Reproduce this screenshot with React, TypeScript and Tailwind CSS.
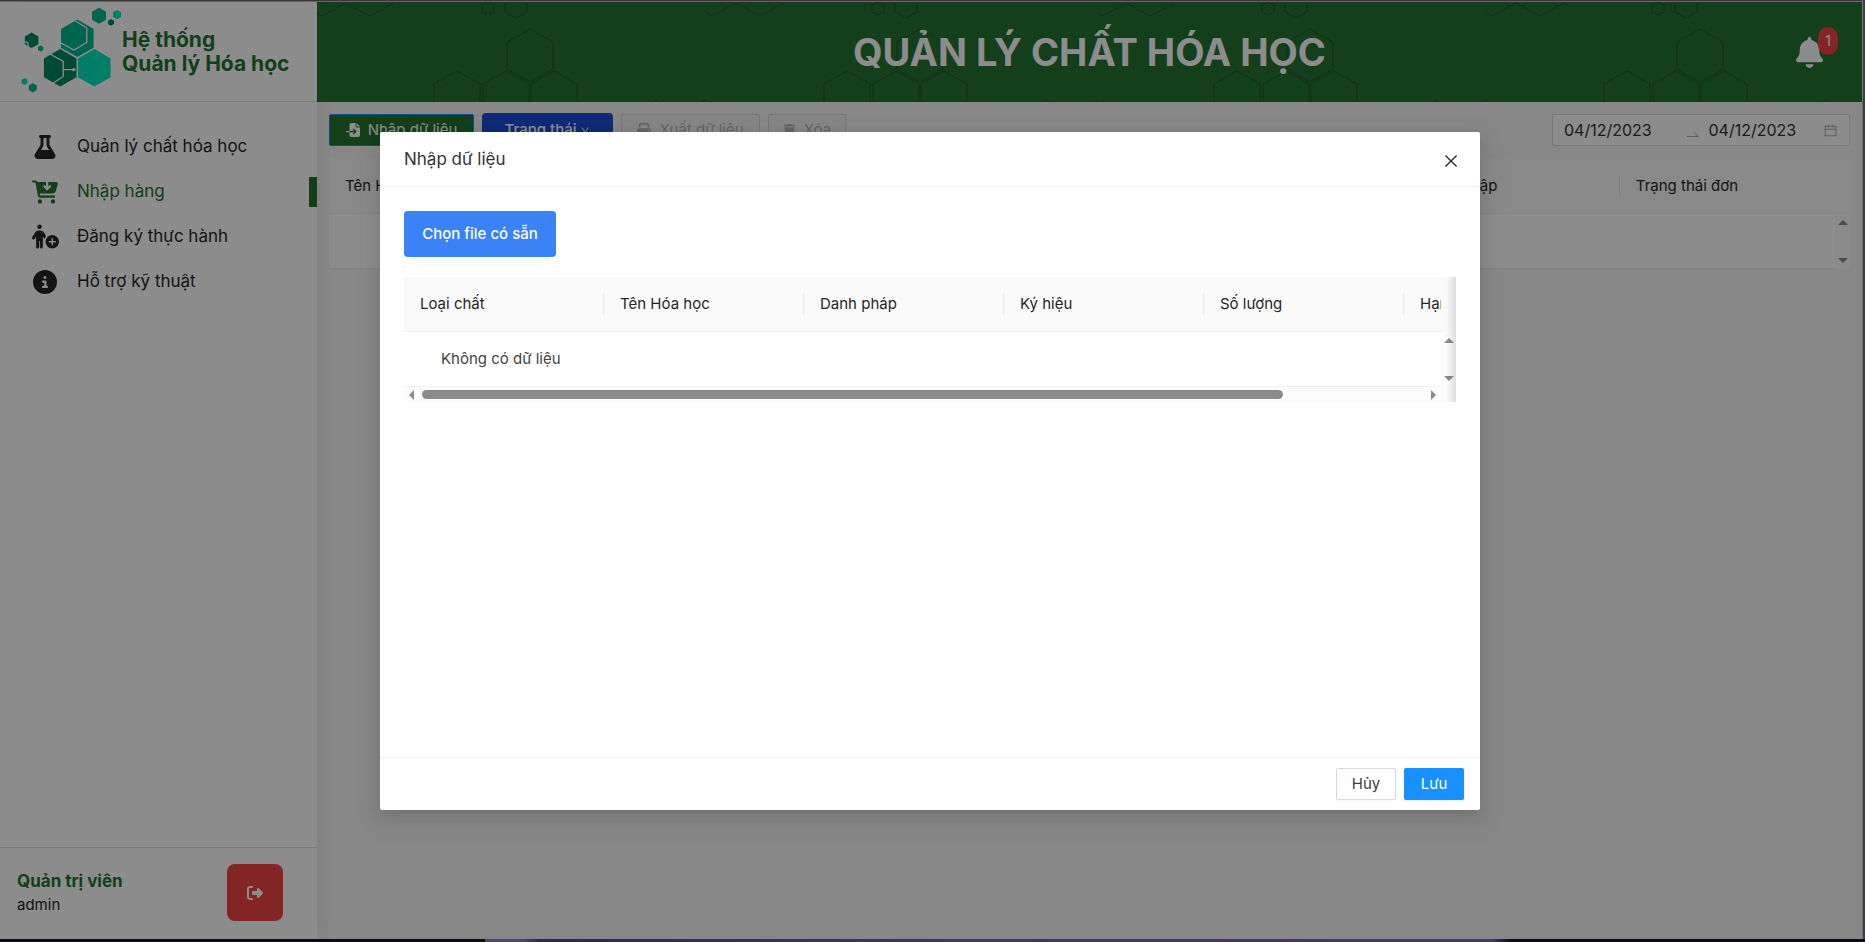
import type { ReactNode } from "react";
import { FaBell, FaCartArrowDown, FaCircleInfo, FaFileImport, FaFlask, FaPersonCirclePlus, FaPrint, FaRightFromBracket, FaTrash } from "react-icons/fa6";
import { AiOutlineCalendar, AiOutlineClose, AiOutlineDown } from "react-icons/ai";

function hex(cx: number, cy: number, w: number, h: number) {
  const q = h / 2;
  return [
    [cx, cy - h],
    [cx + w, cy - q],
    [cx + w, cy + q],
    [cx, cy + h],
    [cx - w, cy + q],
    [cx - w, cy - q],
  ].map((p) => p.join(",")).join(" ");
}

function Logo() {
  return (
    <svg viewBox="20 6 102 86" className="h-[86px] w-[102px] shrink-0" aria-hidden="true">
      <polygon points={hex(77.3, 37.3, 16.3, 18.8)} fill="#00b68f" />
      <polyline points="73,18.5 86.8,27 86.8,41.5 74,49 60,41.5" fill="none" stroke="#fff" strokeWidth="1.3" />
      <polygon points={hex(60.2, 66.8, 16.3, 18.8)} fill="#008862" />
      <polyline points="50,53 63.2,60.5 63.2,75.5 51,83.5" fill="none" stroke="#fff" strokeWidth="1.3" />
      <path d="M63 68.6H73" stroke="#fff" strokeWidth="1.2" />
      <circle cx="73.8" cy="68.6" r="1.7" fill="#fff" />
      <polygon points={hex(94.3, 66.8, 16.3, 18.8)} fill="#00e6bd" />
      <polygon points={hex(99, 14.8, 7, 8)} fill="#00b68f" />
      <polygon points={hex(117, 13.6, 4, 4.6)} fill="#00e6bd" />
      <polygon points={hex(111, 21.4, 3, 3.4)} fill="#008862" />
      <polygon points={hex(31.6, 39.3, 6.8, 7.8)} fill="#008862" />
      <path d="M24 40.5l4 1.5v4" fill="none" stroke="#fff" strokeWidth="1.2" />
      <polygon points={hex(40.6, 47.5, 2.6, 3)} fill="#00b68f" />
      <polygon points={hex(24.5, 80.5, 3, 3.5)} fill="#00e6bd" />
      <polygon points={hex(32.8, 86.8, 4, 4.6)} fill="#00b68f" />
    </svg>
  );
}

function HexPattern() {
  return (
    <svg className="absolute inset-0 h-full w-full" aria-hidden="true">
      <defs>
        <pattern id="hexes" width="390" height="100" patternUnits="userSpaceOnUse">
          <g fill="none" stroke="#000" strokeOpacity="0.24" strokeWidth="1">
            <path d="M0 11L5 14L29 1L53 14L77 1" />
            <path d="M165 3L171 0L177 3V10L171 13L165 10Z" />
            <path d="M188 0V10L199 16L210 10V0" />
            <path d="M213 27L236 40V67L213 80L190 67V40Z" />
            <path d="M117 100V82L140 69L163 82V100" />
            <path d="M166 100V82L189 69L212 82V100" />
            <path d="M214 100V82L237 69L260 82V100" />
            <path d="M336 100L339 98L342 100M385 100L388 98L390 99" />
          </g>
        </pattern>
      </defs>
      <rect width="100%" height="100%" fill="url(#hexes)" />
    </svg>
  );
}

function Arrow({ dir }: { dir: "up" | "down" | "left" | "right" }) {
  const d = {
    up: "M0 5L5 0L10 5Z",
    down: "M0 0H10L5 5Z",
    left: "M5 0V10L0 5Z",
    right: "M0 0L5 5L0 10Z",
  }[dir];
  const vertical = dir === "up" || dir === "down";
  return (
    <svg width={vertical ? 10 : 5} height={vertical ? 5 : 10} className="fill-[#8b8b8b]" aria-hidden="true">
      <path d={d} />
    </svg>
  );
}

function VerticalScroll() {
  return (
    <div className="flex w-[15px] shrink-0 flex-col items-center justify-between bg-[#fcfcfc] py-1.5">
      <Arrow dir="up" />
      <Arrow dir="down" />
    </div>
  );
}

function HeadCell({ children, last }: { children?: ReactNode; last?: boolean }) {
  return (
    <th className="h-[55px] border-b border-[#f0f0f0] p-0 text-left font-normal">
      <div className={last ? "flex h-[22px] items-center px-4" : "flex h-[22px] items-center border-r border-[#e8e8e8] px-4"}>
        {children}
      </div>
    </th>
  );
}

const menu = [
  { label: "Quản lý chất hóa học", icon: <FaFlask size={24} /> },
  { label: "Nhập hàng", icon: <FaCartArrowDown size={26} />, active: true },
  { label: "Đăng ký thực hành", icon: <FaPersonCirclePlus size={27} /> },
  { label: "Hỗ trợ kỹ thuật", icon: <FaCircleInfo size={24} /> },
];

function Sidebar() {
  return (
    <aside className="relative z-10 flex w-[317px] shrink-0 flex-col bg-white shadow-[2px_0_20px_rgba(0,0,0,0.08)]">
      <div className="flex h-[100px] items-center border-b border-[#e0e0e0] pb-1 pl-5">
        <Logo />
        <p className="pt-1 text-[21px] leading-6 font-bold text-[#247331]">
          Hệ thống
          <br />
          Quản lý Hóa học
        </p>
      </div>
      <nav className="flex flex-1 flex-col pt-[22px]">
        {menu.map((m) => (
          <a
            key={m.label}
            href="#"
            className={
              m.active
                ? "flex h-[45px] items-center pl-[29px] text-[17px] text-[#247331]"
                : "flex h-[45px] items-center pl-[29px] text-[17px] text-[#262626]"
            }
          >
            <span className="flex w-8 justify-center">{m.icon}</span>
            <span className="ml-4 flex-1">{m.label}</span>
            {m.active && <span className="h-[30px] w-2 bg-[#247331]" />}
          </a>
        ))}
      </nav>
      <div className="flex h-[92px] items-center justify-between border-t border-[#dcdcdc] pr-[34px] pb-0.5 pl-[17px]">
        <div>
          <p className="text-[17px] leading-6 font-bold text-[#247331]">Quản trị viên</p>
          <p className="text-[15px] leading-6 text-[#262626]">admin</p>
        </div>
        <button type="button" aria-label="Đăng xuất" className="flex h-[57px] w-14 items-center justify-center rounded-lg bg-[#ef4444] text-white">
          <FaRightFromBracket size={16} />
        </button>
      </div>
    </aside>
  );
}

function Toolbar() {
  return (
    <div className="flex items-center gap-2">
      <button type="button" className="flex h-8 w-[145px] items-center justify-center gap-2 rounded-xs border border-[#1890ff] bg-[#247331] text-[15px] text-white">
        <FaFileImport size={14} />
        Nhập dữ liệu
      </button>
      <button type="button" className="flex h-[34px] w-[131px] items-center justify-center gap-1 rounded bg-[#1d4ed8] text-[15px] font-medium text-white">
        Trạng thái
        <AiOutlineDown size={10} />
      </button>
      <button type="button" disabled className="flex h-8 w-[139px] items-center justify-center gap-2 rounded-xs border border-[#d9d9d9] bg-[#f5f5f5] text-[15px] text-[#b8b8b8]">
        <FaPrint size={14} />
        Xuất dữ liệu
      </button>
      <button type="button" disabled className="flex h-8 w-[78px] items-center justify-center gap-2 rounded-xs border border-[#d9d9d9] bg-[#f5f5f5] text-[15px] text-[#b8b8b8]">
        <FaTrash size={13} />
        Xóa
      </button>
      <div className="ml-auto flex h-8 w-[298px] items-center rounded-xs border border-[#d9d9d9] bg-white px-[11px] text-[16px] text-[#333]">
        <input aria-label="Từ ngày" defaultValue="04/12/2023" className="w-0 flex-1 bg-transparent outline-none" />
        <svg width="12" height="5" className="mt-2 mr-[10px] ml-2 shrink-0 stroke-[#aaa]" fill="none" aria-hidden="true">
          <path d="M0 4.500H11.500L7 0.500" />
        </svg>
        <input aria-label="Đến ngày" defaultValue="04/12/2023" className="w-0 flex-1 bg-transparent outline-none" />
        <AiOutlineCalendar size={15} className="shrink-0 text-[#aaa]" />
      </div>
    </div>
  );
}

function OrdersTable() {
  return (
    <div className="mt-3 flex bg-[#fafafa]">
      <div className="min-w-0 flex-1">
        <table className="w-full table-fixed border-separate border-spacing-0 text-[15px] text-[#262626]">
          <thead>
            <tr>
              <HeadCell>Tên Hóa học</HeadCell>
              <HeadCell />
              <HeadCell />
              <HeadCell />
              <HeadCell />
              <HeadCell>Ngày nhập</HeadCell>
              <HeadCell last>Trạng thái đơn</HeadCell>
            </tr>
          </thead>
          <tbody>
            <tr>
              <td colSpan={7} className="h-[55px] border-b border-[#f0f0f0] bg-white" />
            </tr>
          </tbody>
        </table>
      </div>
      <div className="flex flex-col">
        <div className="h-[55px] border-b border-[#f0f0f0]" />
        <div className="flex flex-1">
          <VerticalScroll />
        </div>
      </div>
    </div>
  );
}

const columns = ["Loại chất", "Tên Hóa học", "Danh pháp", "Ký hiệu", "Số lượng", "Hạn"];

function ImportTable() {
  return (
    <div className="relative mt-5">
      <div className="flex">
        <div className="min-w-0 flex-1 overflow-hidden">
          <table className="w-[1200px] table-fixed border-separate border-spacing-0 text-[15px] text-[#262626]">
            <thead className="bg-[#fafafa]">
              <tr>
                {columns.map((c) => (
                  <HeadCell key={c} last={c === "Hạn"}>{c}</HeadCell>
                ))}
              </tr>
            </thead>
            <tbody>
              <tr>
                <td colSpan={6} className="h-[55px] border-b border-[#f0f0f0] p-0 pl-[37px] text-[#444]">
                  Không có dữ liệu
                </td>
              </tr>
            </tbody>
          </table>
        </div>
        <div className="flex flex-col">
          <div className="h-[55px] bg-[#fafafa]" />
          <div className="flex flex-1">
            <VerticalScroll />
          </div>
        </div>
      </div>
      <div className="flex h-[15px] items-center bg-[#fcfcfc] pr-5 pl-[5px]">
        <Arrow dir="left" />
        <div className="mx-2 flex flex-1">
          <div className="h-[9px] w-[86%] rounded-full bg-[#8b8b8b]" />
        </div>
        <Arrow dir="right" />
      </div>
      <div className="pointer-events-none absolute inset-y-0 right-0 w-[10px] bg-linear-to-r from-black/0 to-black/12" />
    </div>
  );
}

function ImportDialog() {
  return (
    <div className="absolute inset-0 z-30 flex items-start justify-center bg-black/45 pt-[132px] pr-[2px]">
      <section
        role="dialog"
        aria-modal="true"
        aria-labelledby="dialog-title"
        className="flex w-[1100px] flex-col rounded-xs bg-white shadow-[0_9px_28px_8px_rgba(0,0,0,0.05),0_6px_16px_rgba(0,0,0,0.08),0_3px_6px_-4px_rgba(0,0,0,0.12)]"
      >
        <header className="flex h-[55px] items-center justify-between border-b border-[#f0f0f0] px-6">
          <h2 id="dialog-title" className="text-[17px] leading-6 text-[#333]">Nhập dữ liệu</h2>
          <button type="button" aria-label="Đóng" className="-mr-1 pt-1 text-[#333]">
            <AiOutlineClose size={18} />
          </button>
        </header>
        <div className="h-[570px] p-6">
          <button type="button" className="h-[46px] w-[152px] rounded bg-[#3b82f6] text-[15px] font-medium text-white">
            Chọn file có sẵn
          </button>
          <ImportTable />
        </div>
        <footer className="flex justify-end gap-2 border-t border-[#f0f0f0] px-4 py-[10px]">
          <button type="button" className="h-8 w-[60px] rounded-xs border border-[#d9d9d9] bg-white text-[15px] text-[#404040] shadow-[0_2px_0_rgba(0,0,0,0.02)]">
            Hủy
          </button>
          <button type="button" className="h-8 w-[60px] rounded-xs bg-[#1890ff] text-[15px] text-white shadow-[0_2px_0_rgba(0,0,0,0.05)]">
            Lưu
          </button>
        </footer>
      </section>
    </div>
  );
}

export default function App() {
  return (
    <div className="flex h-screen flex-col bg-[#15121f] font-['Inter','Noto_Sans',sans-serif]">
      <div className="flex min-h-0 flex-1 bg-[#3c3c40]">
        <div className="relative flex min-w-0 flex-1 flex-col">
          <div className="h-[2px] shrink-0 border-b border-[#c0b8c0] bg-[#6a656a]" />
          <div className="flex min-h-0 flex-1">
            <Sidebar />
            <div className="flex min-w-0 flex-1 flex-col bg-[#f6f6f6]">
              <header className="relative z-20 flex h-[100px] shrink-0 items-center justify-center bg-[#247331]">
                <HexPattern />
                <h1 className="relative text-[38px] leading-none font-bold text-white">QUẢN LÝ CHẤT HÓA HỌC</h1>
                <button type="button" aria-label="Thông báo" className="absolute top-[25px] right-6 h-[46px] w-[46px] text-white">
                  <FaBell size={31} className="absolute top-[10px] left-0.5" />
                  <span className="absolute top-0 right-0 flex h-7 w-5 items-center justify-center rounded-full bg-[#ef4444] text-sm">1</span>
                </button>
              </header>
              <main className="flex-1 p-3 pt-[11px]">
                <Toolbar />
                <OrdersTable />
              </main>
            </div>
          </div>
          <ImportDialog />
        </div>
        <div className="w-[3px] border-l border-[#777]" />
      </div>
      <div className="h-[3px] shrink-0 bg-[linear-gradient(to_right,#0c0a1c_26%,#4b4870_26%,#4b4870_28%,#28265a_29%,#3d3568_50%,#4b3468_80%,#0c0a1c_81%)]" />
    </div>
  );
}
